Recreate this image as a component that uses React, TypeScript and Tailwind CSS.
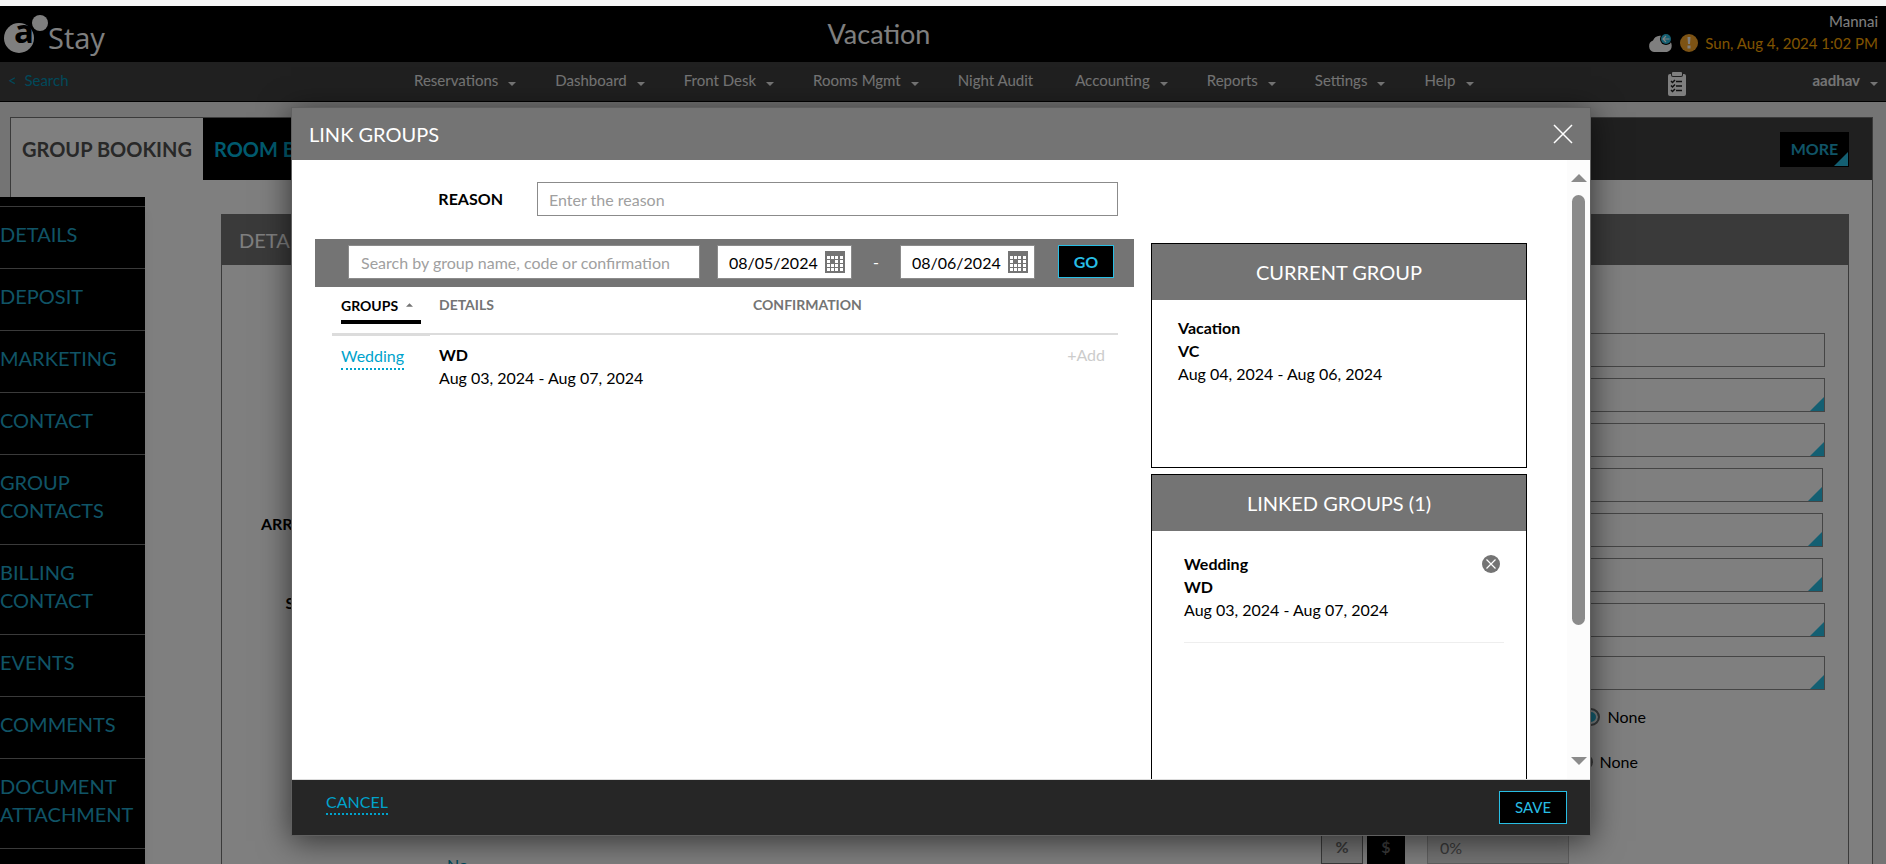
import { ReactNode } from "react";

const menuItems = [
  { name: "Reservations", dropdown: true },
  { name: "Dashboard", dropdown: true },
  { name: "Front Desk", dropdown: true },
  { name: "Rooms Mgmt", dropdown: true },
  { name: "Night Audit", dropdown: false },
  { name: "Accounting", dropdown: true },
  { name: "Reports", dropdown: true },
  { name: "Settings", dropdown: true },
  { name: "Help", dropdown: true },
];

const sideItems = [
  "DETAILS",
  "DEPOSIT",
  "MARKETING",
  "CONTACT",
  "GROUP CONTACTS",
  "BILLING CONTACT",
  "EVENTS",
  "COMMENTS",
  "DOCUMENT ATTACHMENT",
];

const fields = [
  { name: "Group name", picker: false, inset: false },
  { name: "Type", picker: true, inset: false },
  { name: "Source", picker: true, inset: false },
  { name: "Market", picker: true, inset: true },
  { name: "Segment", picker: true, inset: true },
  { name: "Channel", picker: true, inset: true },
  { name: "Rate plan", picker: true, inset: false },
];

const Caret = () => (
  <svg width="8" height="4" viewBox="0 0 8 4" className="mt-1.5" fill="currentColor">
    <path d="M0 0h8L4 4z" />
  </svg>
);

const Corner = () => (
  <svg
    width="14"
    height="14"
    viewBox="0 0 14 14"
    className="pointer-events-none absolute right-px bottom-px text-[#28bee4]"
    fill="currentColor"
  >
    <path d="M14 0v14H0z" />
  </svg>
);

const Logo = () => (
  <svg width="110" height="50" viewBox="0 0 110 50" role="img" aria-label="aStay">
    <circle cx="19" cy="29" r="15" fill="#fff" />
    <text x="14" y="34" fontFamily="'Open Sans', sans-serif" fontWeight="700" fontSize="33" fill="#000">
      a
    </text>
    <circle cx="40" cy="14" r="9" fill="#000" />
    <circle cx="40" cy="14" r="8" fill="#fff" />
    <text x="48" y="40" fontFamily="'Open Sans', sans-serif" fontSize="29" fill="#fff">
      Stay
    </text>
  </svg>
);

const CloudIcon = () => (
  <svg width="25" height="20" viewBox="0 0 25 20">
    <path
      d="M6 19a6 6 0 0 1-1-11.500A8 8 0 0 1 19 6.500a6.500 6.500 0 0 1 0 12.500z"
      fill="#fff"
    />
    <circle cx="18" cy="6" r="6" fill="#000" />
    <circle cx="18" cy="6" r="5" fill="#28bee4" />
    <path d="M21.500 6h-6M18 3l-3 3 3 3" stroke="#fff" strokeWidth="1.200" fill="none" />
  </svg>
);

const ClipboardIcon = () => (
  <svg width="18" height="24" viewBox="0 0 18 24">
    <rect x="0" y="2" width="18" height="22" rx="2" fill="#fff" />
    <rect x="3" y="0" width="12" height="5" rx="2" fill="#404040" />
    <rect x="4" y="0" width="10" height="4" rx="1" fill="#fff" />
    <g stroke="#202020" strokeWidth="1.500" fill="none">
      <path d="M3 9l1.500 1.500L7 8M3 13.500L4.500 15 7 12.500M3 18l1.500 1.500L7 17" />
      <path d="M8 9.500h6M8 14h6M8 18.500h6" />
    </g>
  </svg>
);

const CalendarIcon = () => (
  <svg width="20" height="22" viewBox="0 0 20 22">
    <rect width="20" height="22" fill="#747474" />
    <g fill="#fff">
      {[5, 9, 13, 17].map((y) =>
        [2, 6, 10, 15].map((x) =>
          x === 6 && y === 9 ? null : <rect key={`${x}-${y}`} x={x} y={y} width="3" height="3" />
        )
      )}
    </g>
  </svg>
);

const DateBox = ({ label, value }: { label: string; value: string }) => (
  <div className="flex h-[34px] w-[135px] shrink-0 items-center border border-[#8b8b8b] bg-white">
    <input
      aria-label={label}
      defaultValue={value}
      className="h-full w-[107px] pl-[11px] text-base text-black outline-none"
    />
    <button aria-label={`Pick ${label}`} className="cursor-pointer">
      <CalendarIcon />
    </button>
  </div>
);

const Header = () => (
  <header className="grid h-14 shrink-0 grid-cols-[1fr_auto_1fr] bg-black text-white">
    <div className="pt-[3px]">
      <Logo />
    </div>
    <h1 className="self-center pr-[128px] text-[27px] leading-8">Vacation</h1>
    <div className="flex flex-col items-end pr-2 pt-1 text-[15px] leading-[22px]">
      <span>Mannai</span>
      <div className="flex items-center gap-[7px]">
        <CloudIcon />
        <svg width="18" height="18" viewBox="0 0 18 18">
          <circle cx="9" cy="9" r="9" fill="#fba628" />
          <path d="M7.500 3h3l-.5 7h-2zM7.500 11.500h3v3h-3z" fill="#fff" />
        </svg>
        <span className="text-[#ffa800]">Sun, Aug 4, 2024 1:02 PM</span>
      </div>
    </div>
  </header>
);

const Menu = () => (
  <nav className="flex h-10 shrink-0 items-center border-b border-black bg-[#404040] pb-0.5 text-[15px] text-[#e8e8e8]">
    <a href="#search" className="w-[414px] pl-2 text-[#0092b4]">
      &lt;&nbsp; Search
    </a>
    <ul className="flex gap-[39px]">
      {menuItems.map((item) => (
        <li key={item.name} className={item.dropdown ? "" : "pr-[3px]"}>
          <button className="flex cursor-pointer items-center gap-2.5">
            {item.name}
            {item.dropdown && <Caret />}
          </button>
        </li>
      ))}
    </ul>
    <button aria-label="Tasks" className="mr-[126px] ml-auto cursor-pointer pt-1.5">
      <ClipboardIcon />
    </button>
    <button className="mr-2 flex cursor-pointer items-center gap-2.5 font-bold">
      aadhav
      <Caret />
    </button>
  </nav>
);

const Sidebar = () => (
  <aside className="absolute top-[191px] bottom-0 left-0 w-[145px] overflow-hidden bg-black pt-[9px] shadow-lg">
    <ul className="text-xl leading-7 text-[#20a8cc]">
      {sideItems.map((item) => (
        <li key={item} className="border-t border-[#747474] pt-[13px] pb-5">
          <a href="#section" className="block w-[140px]">
            {item}
          </a>
        </li>
      ))}
      <li className="border-t border-[#747474]" />
    </ul>
  </aside>
);

const Picker = ({ name, picker, inset }: { name: string; picker: boolean; inset: boolean }) => (
  <div className={inset ? "relative mr-0.5" : "relative"}>
    <input aria-label={name} className="block h-[34px] w-full border border-[#8b8b8b]" />
    {picker && <Corner />}
  </div>
);

const Booking = () => (
  <main className="mt-[15px] mr-[13px] ml-2.5 min-h-0 flex-1 border border-b-0 border-[#747474] bg-white">
    <div className="flex h-[62px] items-center bg-[#404040] pr-[23px] text-xl font-bold">
      <button className="h-full w-48 cursor-pointer bg-white text-[#505050]">GROUP BOOKING</button>
      <button className="h-full w-24 cursor-pointer bg-black pl-[11px] text-left whitespace-nowrap text-[#00b4dc]">
        ROOM B
      </button>
      <button className="relative ml-auto h-[35px] w-[69px] cursor-pointer bg-black text-base text-[#20a8cc]">
        MORE
        <Corner />
      </button>
    </div>
    <section className="mt-[34px] mr-[23px] ml-[210px] h-full border border-[#747474]">
      <h2 className="h-[50px] bg-[#747474] pl-[17px] text-xl leading-[50px] text-white">DETAILS</h2>
      <div className="grid grid-cols-2">
        <div className="pt-[247px] font-bold">
          <div className="w-[105px] text-right leading-6">ARRIVAL</div>
          <div className="mt-[55px] w-[101px] text-right leading-6">STAY</div>
          <a href="#notes" className="mt-[238px] ml-[225px] block text-base font-normal text-[#0092b4]">
            No
          </a>
        </div>
        <div className="mr-[23px] pt-[68px]">
          <div className="flex flex-col gap-[11px]">
            {fields.map((field) => (
              <Picker key={field.name} {...field} />
            ))}
          </div>
          <div className="mt-[19px]">
            <Picker name="Agent" picker inset={false} />
          </div>
          <label className="mt-2.5 flex h-[34px] items-center justify-end gap-2 pr-[179px]">
            <input
              type="radio"
              name="commission"
              defaultChecked
              className="size-[18px] appearance-none rounded-full border-2 border-[#747474] bg-[#28bee4] shadow-[inset_0_0_0_2px_white]"
            />
            None
          </label>
          <label className="mt-[11px] flex h-[34px] items-center justify-end gap-[7px] pr-[187px]">
            <input
              type="radio"
              name="discount"
              className="size-[18px] appearance-none rounded-full border-2 border-[#747474]"
            />
            None
          </label>
          <div className="mt-[51px] flex justify-end pr-[256px] text-base">
            <button className="h-[34px] w-[42px] cursor-pointer border border-[#747474] bg-[#e8e8e8] font-bold text-[#747474]">
              %
            </button>
            <button className="ml-1 h-[34px] w-[38px] cursor-pointer bg-black font-bold text-[#747474]">
              $
            </button>
            <input
              aria-label="Discount"
              defaultValue="0%"
              className="ml-[22px] h-[34px] w-[142px] border border-[#c0c0c0] bg-[#e8e8e8] px-3 text-[#747474]"
            />
          </div>
        </div>
      </div>
    </section>
  </main>
);

const Scrollbar = () => (
  <div className="flex w-[23px] shrink-0 flex-col items-center bg-[#fcfcfc] py-3.5 text-[#8b8b8b]">
    <svg width="16" height="8" viewBox="0 0 16 8" fill="currentColor">
      <path d="M8 0l8 8H0z" />
    </svg>
    <div className="mt-[13px] h-[430px] w-[13px] rounded-full bg-[#8b8b8b]" />
    <svg width="16" height="8" viewBox="0 0 16 8" className="mt-auto" fill="currentColor">
      <path d="M0 0h16L8 8z" />
    </svg>
  </div>
);

const GroupCard = ({ title, children }: { title: string; children: ReactNode }) => (
  <section className="border border-black">
    <h3 className="h-14 bg-[#747474] text-center text-xl leading-14 text-white">{title}</h3>
    {children}
  </section>
);

const GroupsTable = () => (
  <table className="mr-4 ml-[17px] table-fixed border-collapse text-left">
    <thead>
      <tr className="h-[47px] align-top text-sm text-[#747474]">
        <th className="w-[98px] border-b-3 border-[#dcdcdc] pt-[9px] pl-[9px]">
          <button className="flex h-7 w-20 cursor-pointer gap-2 border-b-4 border-black leading-5 font-bold text-black">
            GROUPS
            <svg width="7" height="4" viewBox="0 0 8 4" className="mt-[7px]" fill="#747474">
              <path d="M4 0l4 4H0z" />
            </svg>
          </button>
        </th>
        <th className="w-[314px] border-b-2 border-[#dcdcdc] pt-2 pl-[9px] leading-5 font-bold">DETAILS</th>
        <th className="border-b-2 border-[#dcdcdc] pt-2 pl-[9px] leading-5 font-bold">CONFIRMATION</th>
        <th className="w-[100px] border-b-2 border-[#dcdcdc]" />
      </tr>
    </thead>
    <tbody>
      <tr className="align-top leading-[23px]">
        <td className="pt-2 pl-[9px]">
          <a href="#wedding" className="inline-block border-b-2 border-dotted border-[#00a3cc] leading-6 text-[#00a3cc]">
            Wedding
          </a>
        </td>
        <td className="pt-2 pl-[9px]">
          <div className="font-bold">WD</div>
          <div>Aug 03, 2024 - Aug 07, 2024</div>
        </td>
        <td />
        <td className="pt-2 pr-[13px] text-right">
          <button disabled className="text-[#cccccc]">
            +Add
          </button>
        </td>
      </tr>
    </tbody>
  </table>
);

const LinkGroups = () => (
  <div
    role="dialog"
    aria-label="Link groups"
    className="absolute inset-x-0 top-[101px] mr-[295px] ml-[291px] flex flex-col border border-[#606060] bg-white shadow-[0_5px_30px_rgba(0,0,0,0.6)]"
  >
    <div className="flex h-[52px] items-center justify-between bg-[#747474] px-[17px]">
      <h2 className="text-xl text-white">LINK GROUPS</h2>
      <button aria-label="Close" className="cursor-pointer">
        <svg width="20" height="20" viewBox="0 0 20 20" stroke="#fff" strokeWidth="1.500">
          <path d="M1 1l18 18M19 1L1 19" />
        </svg>
      </button>
    </div>

    <div className="flex h-[620px] overflow-hidden border-b border-[#dcdcdc]">
      <div className="flex flex-1 gap-[17px] pr-10 pl-[23px]">
        <div className="flex flex-1 flex-col pt-[22px]">
          <div className="mr-4 flex items-center gap-[34px]">
            <label htmlFor="reason" className="w-[188px] text-right font-bold">
              REASON
            </label>
            <input
              id="reason"
              placeholder="Enter the reason"
              className="h-[34px] flex-1 border border-[#8b8b8b] px-[11px] placeholder:text-[#a0a0a0]"
            />
          </div>
          {/* Search filters */}
          <div className="mt-[23px] flex h-12 shrink-0 items-start bg-[#747474] pt-1.5 pr-5 pl-[33px]">
            <input
              aria-label="Search groups"
              placeholder="Search by group name, code or confirmation"
              className="h-[34px] flex-1 border border-[#8b8b8b] bg-white px-3 placeholder:text-[#a0a0a0]"
            />
            <div className="ml-[17px] flex">
              <DateBox label="start date" value="08/05/2024" />
              <span className="w-12 text-center leading-[34px] text-white">-</span>
              <DateBox label="end date" value="08/06/2024" />
            </div>
            <button className="ml-[23px] h-[33px] w-14 cursor-pointer border border-[#28bee4] bg-black font-bold text-[#28bee4]">
              GO
            </button>
          </div>
          <GroupsTable />
        </div>

        <div className="flex w-[376px] shrink-0 flex-col gap-1.5 pt-[83px]">
          <GroupCard title="CURRENT GROUP">
            <div className="h-[167px] px-[26px] pt-4 leading-[23px]">
              <div className="font-bold">Vacation</div>
              <div className="font-bold">VC</div>
              <div>Aug 04, 2024 - Aug 06, 2024</div>
            </div>
          </GroupCard>
          <GroupCard title="LINKED GROUPS (1)">
            <div className="h-[300px] pt-[21px] pr-[22px] pl-8 leading-[23px]">
              <div className="flex items-start justify-between border-b border-[#eeeeee] pb-[21px]">
                <div>
                  <div className="font-bold">Wedding</div>
                  <div className="font-bold">WD</div>
                  <div>Aug 03, 2024 - Aug 07, 2024</div>
                </div>
                <button aria-label="Remove Wedding" className="mt-[3px] mr-1 cursor-pointer">
                  <svg width="18" height="18" viewBox="0 0 18 18">
                    <circle cx="9" cy="9" r="9" fill="#747474" />
                    <path d="M4.500 4.500l9 9M13.500 4.500l-9 9" stroke="#fff" strokeWidth="1.200" />
                  </svg>
                </button>
              </div>
            </div>
          </GroupCard>
        </div>
      </div>
      <Scrollbar />
    </div>

    <div className="flex h-[55px] items-start justify-between bg-[#262626] pt-[11px] pr-[23px] pl-[34px]">
      <button className="cursor-pointer border-b-2 border-dotted border-[#00a3cc] leading-[22px] text-[#00a3cc]">
        CANCEL
      </button>
      <button className="h-[33px] w-[68px] cursor-pointer border border-[#28bee4] bg-black text-[15px] text-[#28bee4]">
        SAVE
      </button>
    </div>
  </div>
);

const App = () => {
  return (
    <div className="flex h-screen flex-col overflow-hidden font-[Lato,sans-serif] text-base text-black">
      <div className="h-1.5 shrink-0 bg-[#f6f6f6]" />
      <div className="relative flex min-h-0 flex-1 flex-col overflow-hidden bg-[#e8e8e8]">
        <Header />
        <Menu />
        <Booking />
        <Sidebar />
        <div className="absolute inset-0 bg-black/50" />
        <LinkGroups />
      </div>
    </div>
  );
};

export default App;
